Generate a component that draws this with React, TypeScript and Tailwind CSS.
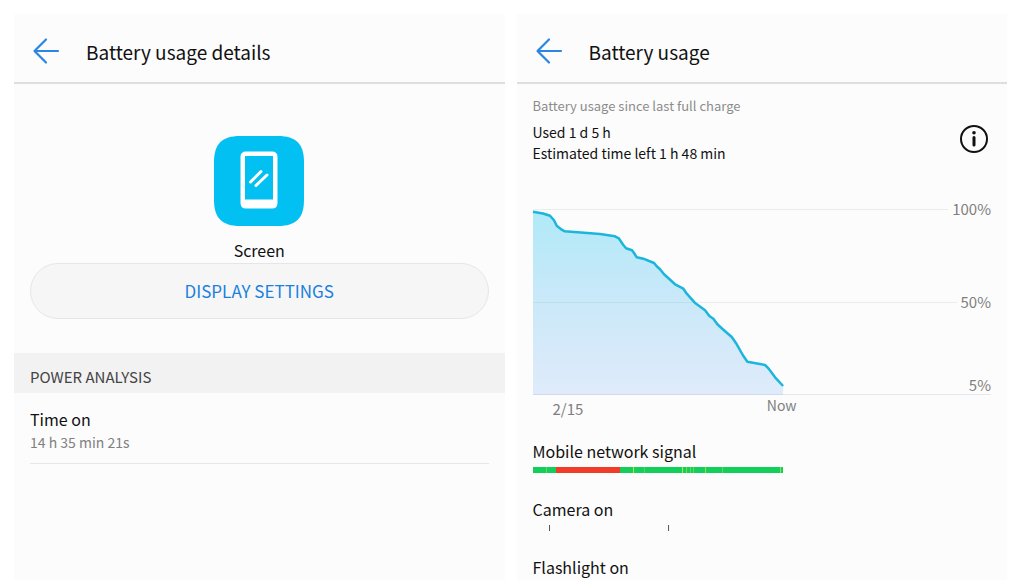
import type { ReactNode } from "react"

const LEVELS = [
    [0, 2.7], [10, 4.5], [17, 6.7], [21, 11.3], [23.7, 16.7], [28.7, 20.7], [31.7, 22.3], [67, 25], [82, 27.3],
    [85.7, 29.3], [90.3, 36], [93, 39.3], [99, 41.3], [101, 44], [103.7, 48.3], [110.3, 49.7], [121, 54],
    [123.7, 57.3], [127, 60.3], [131, 65.3], [142, 75.3], [150.3, 79.7], [153.7, 84.7], [161.7, 93.7],
    [172, 101.3], [176.3, 107], [180.3, 109.7], [184.3, 115.3], [190.3, 120.7], [198.7, 128], [203.7, 135.3],
    [209.7, 146], [214.3, 152.7], [232, 156], [235.3, 159.3], [242, 168.3], [250, 177],
]

// weak signal moments: x and opacity
const WEAK = [
    [13, 0.5], [100, 1], [111, 0.4], [149, 1], [153, 0.6], [157, 0.5], [160, 0.5], [172, 0.8], [189, 0.5], [247, 0.8],
]

const Panel = ({ title, children }: { title: string; children: ReactNode }) => {
    return (
        <section className="flex-1 min-w-0 flex flex-col bg-[#fcfcfc]">
            <header className="flex items-center gap-6 h-[70px] px-4 pt-1.5 border-b-2 border-[#dedede]">
                <button aria-label="Back" className="w-8 h-8 flex items-center justify-center">
                    <svg width="28" height="28" viewBox="0 0 28 28" fill="none" stroke="#2a86e0" strokeWidth="2.2" strokeLinecap="round" strokeLinejoin="round">
                        <path d="M26 14H2.500M14 2.500L2.500 14L14 25.500" />
                    </svg>
                </button>
                <h1 className="pt-0.5 text-[19px] leading-[28px]">{title}</h1>
            </header>
            {children}
        </section>
    )
}

const ScreenIcon = () => {
    return (
        <svg width="90" height="90" viewBox="0 0 90 90" fill="none">
            <path d="M0 26C0 8 8 0 26 0H64C82 0 90 8 90 26V64C90 82 82 90 64 90H26C8 90 0 82 0 64Z" fill="#03c0f2" />
            <path fillRule="evenodd" d="M32 15.500H58Q63.500 15.500 63.500 21V67Q63.500 72.500 58 72.500H32Q26.500 72.500 26.500 67V21Q26.500 15.500 32 15.500ZM31 20V63.500H59V20Z" fill="#fff" />
            <path d="M36.500 46L47 35.500M42 49.500L53 39" stroke="#fff" strokeWidth="3" strokeLinecap="round" />
        </svg>
    )
}

const Details = () => {
    return (
        <Panel title="Battery usage details">
            <div className="flex flex-col items-center px-4 pt-[52px] pb-[33px]">
                <ScreenIcon />
                <span className="mt-3 text-[16px] leading-[24px]">Screen</span>
                <button className="w-full h-14 mt-px rounded-full border border-[#e6e6e6] bg-[#f6f6f6] text-[17px] leading-[24px] text-[#1a7fe0]">
                    DISPLAY SETTINGS
                </button>
            </div>
            <h2 className="h-10 mt-px px-4 pt-3 bg-[#f2f2f2] text-[15px] leading-[24px] text-[#444444]">POWER ANALYSIS</h2>
            <div className="mx-4 pt-3.5 pb-2.5 border-b border-[#e8e8e8]">
                <h3 className="text-[16px] leading-[24px]">Time on</h3>
                <p className="text-[14px] leading-[22px] text-[#808080]">14 h 35 min 21s</p>
            </div>
        </Panel>
    )
}

const GridLine = ({ label }: { label: string }) => {
    return (
        <div className="flex items-center h-5">
            <div className="flex-1 h-px bg-[#ececec]" />
            <span className="pl-1">{label}</span>
        </div>
    )
}

const Chart = () => {
    const line = LEVELS.map(([x, y]) => `${x},${y}`).join(" ")

    return (
        <div>
            <div className="relative flex flex-col text-[15px] leading-[20px] text-[#808080]">
                <GridLine label="100%" />
                <div className="h-[73px]" />
                <GridLine label="50%" />
                <div className="h-[63px]" />
                <div className="h-5 text-right border-b border-[#e8e8e8]">5%</div>
                <svg className="absolute left-0 bottom-0 w-6/11 h-[186px] overflow-visible" viewBox="0 0 250 186" preserveAspectRatio="none" fill="none">
                    <defs>
                        <linearGradient id="level" x1="0" y1="0" x2="0" y2="1">
                            <stop offset="0" stopColor="#00bfee" stopOpacity="0.3" />
                            <stop offset="1" stopColor="#4792f0" stopOpacity="0.16" />
                        </linearGradient>
                    </defs>
                    <polygon points={`${line} 250,186 0,186`} fill="url(#level)" />
                    <polyline points={line} stroke="#1cb5dc" strokeWidth="2.500" strokeLinejoin="round" vectorEffect="non-scaling-stroke" />
                </svg>
            </div>
            <div className="w-6/11 flex justify-between pl-5 text-[#808080]">
                <span className="pt-1 text-[15px] leading-[20px]">2/15</span>
                <span className="-mr-3.5 text-[14px] leading-[20px]">Now</span>
            </div>
        </div>
    )
}

const Usage = () => {
    return (
        <Panel title="Battery usage">
            <div className="px-4 pt-2.5">
                <p className="text-[13px] leading-[24px] text-[#8c8c8c]">Battery usage since last full charge</p>
                <div className="flex items-center justify-between pt-1">
                    <div className="text-[14px] leading-[21px]">
                        <p>Used 1 d 5 h</p>
                        <p>Estimated time left 1 h 48 min</p>
                    </div>
                    <button aria-label="Info" className="mr-0.5 mb-2">
                        <svg width="30" height="30" viewBox="0 0 30 30" fill="none" stroke="#111111">
                            <circle cx="15" cy="15" r="13" strokeWidth="2" />
                            <path d="M15 13.500V21" strokeWidth="3" strokeLinecap="round" />
                            <circle cx="15" cy="8.800" r="1.800" fill="#111111" stroke="none" />
                        </svg>
                    </button>
                </div>
            </div>
            <div className="px-4 pt-[35px]">
                <Chart />
            </div>
            <div className="px-4 pt-5 text-[16px] leading-[24px]">
                <div className="h-[58px]">
                    <h3>Mobile network signal</h3>
                    <svg className="mt-1 w-6/11 h-1.5" viewBox="0 0 250 6" preserveAspectRatio="none">
                        <rect width="250" height="6" fill="#12cf5c" />
                        <rect x="23" width="64" height="6" fill="#f23c2a" />
                        {WEAK.map(([x, opacity]) => (
                            <rect key={x} x={x} width="1" height="6" fill="#b8e83c" opacity={opacity} />
                        ))}
                    </svg>
                </div>
                <div className="h-[58px]">
                    <h3>Camera on</h3>
                    <svg className="mt-1 w-6/11 h-1.5" viewBox="0 0 250 6" preserveAspectRatio="none" fill="#555555">
                        <rect x="16" width="1" height="6" />
                        <rect x="135" width="1" height="6" />
                    </svg>
                </div>
                <h3>Flashlight on</h3>
            </div>
        </Panel>
    )
}

const App = () => {
    return (
        <main className="min-h-screen flex gap-3 px-3.5 pt-3.5 bg-white text-[#111111] font-['Noto_Sans_CJK_SC',sans-serif]">
            <Details />
            <Usage />
        </main>
    )
}

export default App
